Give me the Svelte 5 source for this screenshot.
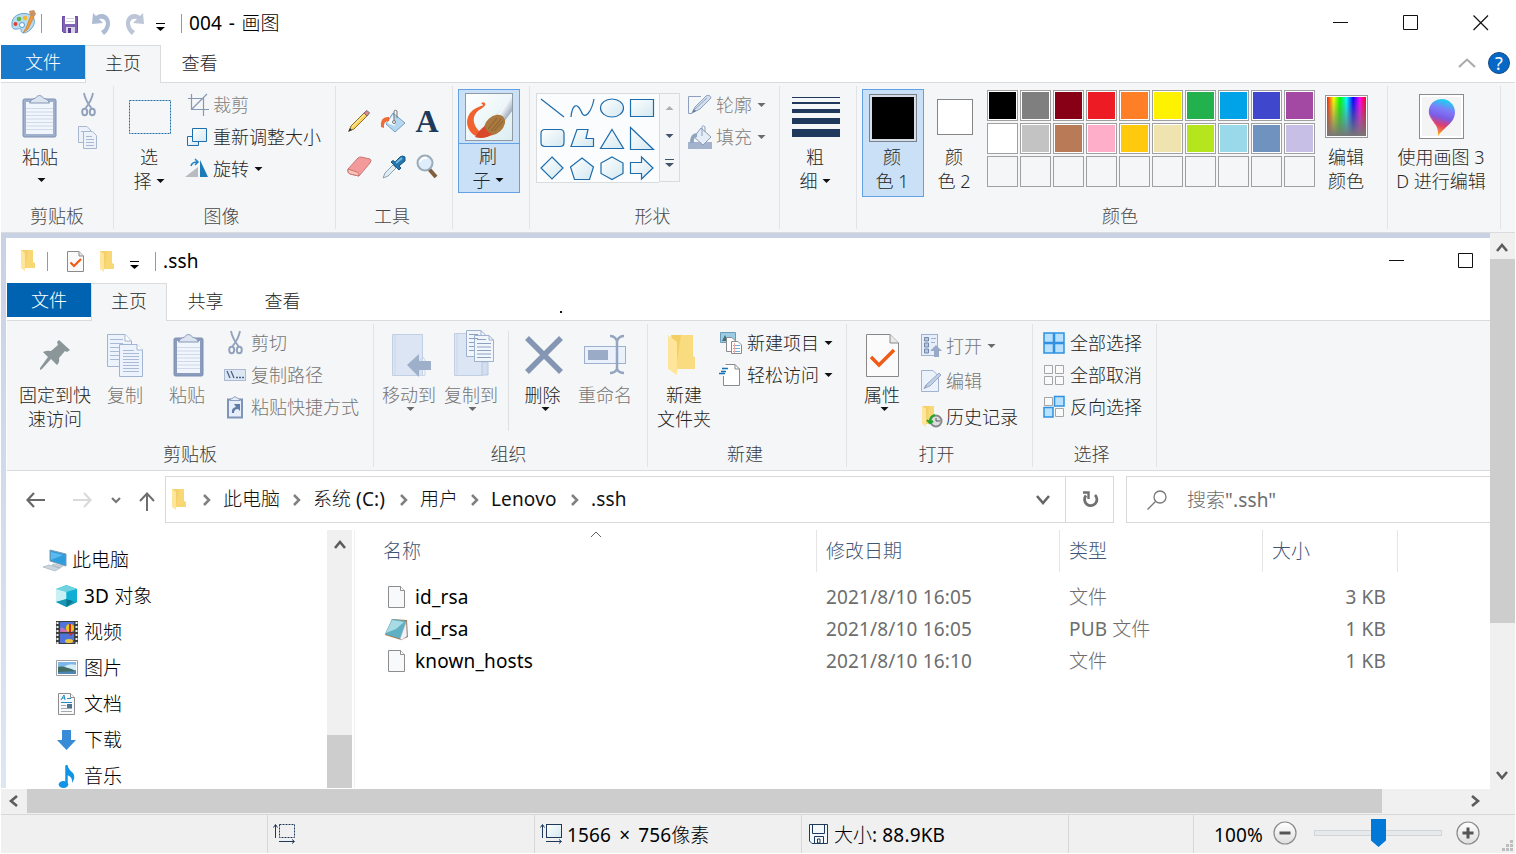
<script>
  const folder = '<path d="M1 1H12V19H5Z" fill="#f3d06b"/><path d="M8 1H13V13L15 14V19H5Z" fill="#f8d775"/><path d="M1 1L5 4V22L1 19Z" fill="#ffe69c"/>';
  const check = '<path d="M.5 .5H12L16.500 5V20.500H.5Z" fill="#fafafa" stroke="#8b8b8b"/><path d="M12 .5V5H16.500" fill="#e4e4e4" stroke="#8b8b8b"/><path d="M3.500 11.500L7 15L14 8" fill="none" stroke="#f05a12" stroke-width="2.200"/>';
  const page = '<path d="M.5 .5H12.500L16.500 4.500V21.500H.5Z" fill="#f8f9fa" stroke="#8d8d8d"/><path d="M12.500 .5V4.500H16.500" fill="#fff" stroke="#8d8d8d"/>';
  const cut = '<g fill="none" stroke="#93a3bd"><path d="M3 0C4 6 7 11 11 16M12 0C11 6 8 11 4 16" stroke-width="1.800"/><ellipse cx="3.700" cy="19" rx="2.500" ry="3.200" stroke-width="2"/><ellipse cx="11.300" cy="19" rx="2.500" ry="3.200" stroke-width="2"/></g>';
  const lines = (x, y, w, n, s) => Array.from({ length: n }, (_, i) => `M${x} ${y + i * s}h${w}`).join('');
  const clip = (w, h, c) => `<rect x="1" y="4" width="${w - 2}" height="${h - 5}" rx="1.500" fill="${c}" stroke="#7e90b4"/><rect x="4" y="7" width="${w - 8}" height="${h - 11}" fill="#f1f5fc"/><path d="${lines(4, 13.5, w - 8, 7, 3.5)}" stroke="#cfd9ea"/><path d="M${w / 2 - 10} 8q1-4 6-5q4-5 8 0q5 1 6 5z" fill="#dbe4f0" stroke="#8597b6"/>`;

  const icons = {
    palette: [25, 25, '<path d="M1 15C0 6 9 2 17 4C25 6 25 14 20 19C15 24 10 24 10 20C10 17 6 20 3 19C1 18 1 17 1 15Z" fill="#b8dcf2" stroke="#6ea4c9"/><circle cx="4.500" cy="14" r="2" fill="#e0412f"/><circle cx="8" cy="9" r="2.300" fill="#5fb548"/><circle cx="14" cy="8" r="2.300" fill="#f3b935"/><circle cx="11" cy="15" r="2.500" fill="#fff" stroke="#579bd0"/><path d="M20 5L15 18L12 23L17 19L23 7Z" fill="#f39b38" stroke="#c77427" stroke-width=".6"/><path d="M18 1L23 0L25 4L23 7L19 5Z" fill="#c89262"/>'],
    save: [17, 17, '<path d="M.5 .5H15.500V16.500H1.500L.5 15.500Z" fill="#8063b5" stroke="#67479f"/><rect x="3" y="0" width="10" height="8" fill="#fff"/><path d="M4 2.500H12M4 5.500H12" stroke="#d4cfe2"/><rect x="4" y="11" width="9" height="6" fill="#d9d3e6"/><rect x="6" y="12" width="3" height="5" fill="#56398d"/>'],
    undo: [20, 22, '<path d="M1 0L4 3C11-2 19 3 18 12Q17 18 12 22L9 18Q14 15 14 10Q13 5 7 6L11 10L0 11Z" fill="#aebbd4"/>'],
    redo: [20, 22, '<path d="M19 0L16 3C9-2 1 3 2 12Q3 18 8 22L11 18Q6 15 6 10Q7 5 13 6L9 10L20 11Z" fill="#bcc6d7"/>'],
    qat: [11, 8, '<path d="M1 .5H10" stroke="currentColor"/><path d="M1 4H10L5.500 8Z" fill="currentColor"/>'],
    min: [16, 16, '<path d="M0 7.500H15" stroke="#111"/>'],
    max: [16, 16, '<path d="M.5 .5H14.500V14.500H.5Z" fill="none" stroke="#111"/>'],
    close: [16, 16, '<path d="M.5 .5L15 15M15 .5L.5 15" stroke="#111" stroke-width="1.200"/>'],
    up: [18, 10, '<path d="M1 9L9 1.500L17 9" fill="none" stroke="#a9a9a9" stroke-width="2"/>'],
    arrow: [9, 4, '<path d="M.5 0H8.500L4.500 4Z" fill="currentColor"/>'],
    paste: [36, 44, clip(35, 43, '#9fb0cc')],
    cut: [15, 24, cut],
    copy: [20, 23, '<g fill="#edf2fa" stroke="#a8b6d0"><path d="M.5 .5H9L12.500 4V16.500H.5Z"/><path d="M5.500 5.500H14.500L18.500 9.500V22.500H5.500Z"/></g><path d="M3 5.500H9M8 10.500H14M8 13.500H16M8 16.500H16M8 19.500H16" stroke="#aab8d4"/>'],
    select: [42, 34, '<rect x=".5" y=".5" width="41" height="33" fill="none" stroke="#1c6ca5" stroke-dasharray="2 1"/>'],
    crop: [22, 22, '<path d="M4.500 0V15.500H22M1 4.500H16.500V22M20 0L5 15" fill="none" stroke="#8798b5" stroke-width="1.200"/>'],
    resize: [22, 22, '<defs><linearGradient id="rz" x2="1" y2="1"><stop stop-color="#fff"/><stop offset="1" stop-color="#d3e8f0"/></linearGradient></defs><path d="M.5 10.500H11.500V19.500H.5Z" fill="url(#rz)" stroke="#1e6fae"/><path d="M5.500 2.500H19.500V15.500H5.500Z" fill="url(#rz)" stroke="#1e6fae"/>'],
    rotate: [24, 22, '<path d="M-2 19H11V9Z" fill="#b8bcc0"/><path d="M13 2L21 19H13Z" fill="#1d7bb5"/><path d="M4 8Q5 4 10 4M8 1L11 4L8 7" fill="none" stroke="#2582bf" stroke-width="1.500"/>'],
    pencil: [24, 24, '<path d="M2 22L4 17L17 4L20 7L7 20Z" fill="#f7d25d" stroke="#907037"/><path d="M5 18L18 5" stroke="#fff0a7"/><path d="M17 4L20 1.500L22.500 4L20 7Z" fill="#e7868c" stroke="#766"/><path d="M1 23L3 19L5 21Z" fill="#333"/>'],
    bucket: [26, 25, '<path d="M13 4L25 14L15 23L6 15Z" fill="#b6d7f0" stroke="#74a0c5"/><path d="M13 6L15 17L7 14Z" fill="#eff8fe"/><path d="M14 12V3Q14 0 17 2V9" fill="none" stroke="#777"/><circle cx="14" cy="13" r="1.500" fill="#fff" stroke="#777"/><path d="M9 8Q0 7 1 18L4 19Q3 12 9 12Z" fill="#ef6a35"/>'],
    eraser: [25, 24, '<path d="M1 14L11 3Q12 2 14 2L23 4Q25 5 23 8L12 21L3 19Q0 18 1 14Z" fill="#f39b9b" stroke="#c97777"/><path d="M1 14L10 17Q12 18 12 21L3 19Q0 18 1 14Z" fill="#fac3b6" stroke="#c97777"/>'],
    dropper: [25, 25, '<path d="M2 23L4 18L12 10L15 13L7 21Z" fill="#e1edf4" stroke="#8ca1ac"/><path d="M10 7L12 5.500L14 7L19 2Q22 0 24 2V6L18 11L20 13L18 15Z" fill="#2477ae" stroke="#165789"/><path d="M15 8L21 3" stroke="#72b8df" stroke-width="2"/>'],
    lens: [24, 26, '<path d="M14 15L21 23" stroke="#80603e" stroke-width="4"/><circle cx="10" cy="9" r="7.500" fill="#dfedfb" stroke="#9aabba" stroke-width="2"/><path d="M5 8Q7 3 12 4" fill="none" stroke="#fff" stroke-width="2"/>'],
    brush: [48, 48, '<defs><linearGradient id="bg" x2="1" y2="1"><stop stop-color="#fff"/><stop offset="1" stop-color="#dceef2"/></linearGradient><linearGradient id="sl" x2="1" y2="1"><stop stop-color="#8998ab"/><stop offset=".45" stop-color="#f4f8fc"/><stop offset="1" stop-color="#66778f"/></linearGradient></defs><rect x=".5" y=".5" width="47" height="47" fill="url(#bg)" stroke="#8f9aa5"/><path d="M31 22L47 4V18L39 29Z" fill="url(#sl)"/><path d="M16 10Q19 8 20.500 11Q20 14 14 17C6 23 8 32 14 38L20 35L27 42Q17 47 9 42C-1 34 1 23 8 17Q14 13 18 12.500Q18 11 16 10Z" fill="#f0622e"/><ellipse cx="29.500" cy="32" rx="12" ry="8.500" transform="rotate(-42 29.500 32)" fill="#a9793f"/><path d="M23 36L32 25M26 38L36 26M29 38L38 28" stroke="#8a6030"/><path d="M10 44Q15 36 20 33Q21 39 27 41Q19 47 10 44Z" fill="#d9482a"/>'],
    outline: [25, 22, '<path d="M13 2.500H.5V19.500H4" fill="none" stroke="#8ca0bd"/><path d="M4 19L7 13L18 2Q22 0 23 4L12 15Z" fill="#d3deee" stroke="#8da0bd"/><path d="M7 15L19 4" stroke="#8fa4c4"/><path d="M4 19L6 15L8 17Z" fill="#627797"/>'],
    fill: [25, 24, '<path d="M0 17H24V24H0Z" fill="#a3b3ce"/><path d="M13 3L23 12L15 20L6 12Z" fill="#e5edf7" stroke="#899db9"/><path d="M9 8Q2 8 2 18H6Q5 12 9 12Z" fill="#8fa4bf"/><path d="M14 11V3Q14-1 17 2V7" fill="none" stroke="#8aa0bd"/>'],
    sizes: [48, 40, '<path d="M0 0H48V1H0ZM0 5H48V7H0ZM0 12H48V16H0ZM0 21H48V27H0ZM0 32H48V40H0Z" fill="#1e395b"/>'],
    spectrum: [43, 43, '<defs><linearGradient id="sp"><stop stop-color="#f11"/><stop offset=".17" stop-color="#ff0"/><stop offset=".33" stop-color="#0f0"/><stop offset=".5" stop-color="#0ff"/><stop offset=".67" stop-color="#00f"/><stop offset=".84" stop-color="#f0f"/><stop offset="1" stop-color="#f00"/></linearGradient><linearGradient id="sv" x2="0" y2="1"><stop stop-color="#777" stop-opacity="0"/><stop offset="1" stop-color="#777"/></linearGradient></defs><rect x=".5" y=".5" width="42" height="42" fill="#fff" stroke="#999"/><rect x="2" y="2" width="39" height="39" fill="url(#sp)"/><rect x="2" y="2" width="39" height="39" fill="url(#sv)"/>'],
    paint3d: [45, 45, '<defs><linearGradient id="p3" x1=".6" x2=".4" y2="1"><stop stop-color="#15d7f1"/><stop offset=".28" stop-color="#7f7cf8"/><stop offset=".5" stop-color="#7a5ce5"/><stop offset=".7" stop-color="#dd3d70"/><stop offset="1" stop-color="#ffb000"/></linearGradient></defs><rect x=".5" y=".5" width="44" height="44" fill="#fff" stroke="#8c8c8c"/><rect x="3" y="3" width="39" height="39" fill="#f4f4f4"/><path d="M23 5C30 5 36 11 36 18C36 29 25 33 19 42Q20 34 14 27C5 17 12 5 23 5Z" fill="url(#p3)"/><path d="M11 20Q12 27 20 35L19 41Q21 34 14 27Z" fill="#ff6f84"/>'],
    folder: [16, 23, folder],
    check: [17, 22, check],
    pin: [32, 32, '<path d="M20 1L31 11L28 13L26 12L20 19Q21 23 18 26L12 20L3 30L1 31L1 29L9 18L4 13Q8 11 12 12L19 6L18 3Z" fill="#8b9698"/>'],
    docs: [37, 43, `<g fill="#edf3fc" stroke="#a1b5d3"><path d="M.5 .5H18L24.500 7V32.500H.5Z"/><path d="M12.500 10.500H30L35.500 16V42.500H12.500Z"/></g><path d="M18 .5V7H24M30 10.500V16H36" fill="#fff" stroke="#a1b5d3"/><path d="${lines(3, 5.5, 13, 2, 4)}${lines(3, 13.500, 9, 4, 4)}${lines(16, 16.5, 11, 1, 3)}${lines(16, 19.5, 16, 7, 3)}" stroke="#a8bad6"/>`],
    clip2: [31, 43, clip(31, 43, '#8a9bbb')],
    path: [22, 12, '<rect x=".5" y=".5" width="21" height="11" fill="#dde7f4" stroke="#aabbd3"/><path d="M3 2L6 9M7 2L10 9" stroke="#4d6288" stroke-width="1.300"/><path d="M12 8.500H14M15 8.500H17M18 8.500H20" stroke="#4d6288" stroke-width="1.500"/>'],
    shortcut: [18, 23, '<path d="M2 3.500H16V21.500H2Z" fill="#e6eef9" stroke="#7e94b9" stroke-width="2"/><path d="M4 4.500Q5 2 7 2Q9-1 11 2Q13 2 14 4.500Z" fill="#e8eff8" stroke="#8da0bd"/><path d="M6 17Q5 12 10 11L8 8H14V15L12 13Q8 13 8 17Z" fill="#5f7ba6"/>'],
    move: [41, 44, '<path d="M.5 1.500H30.500V42.500H.5Z" fill="#dbe5f4" stroke="#c1cfe3"/><path d="M3 2V42M31 24Q35 28 33 36V42.500H27V28Z" fill="none" stroke="#cbd6e8"/><path d="M15 32L27 21V28H39V37H27V44Z" fill="#9eafc9"/>'],
    copyto: [42, 46, `<path d="M.5 3.500H28.500V45.500H.5Z" fill="#dbe5f4" stroke="#c1cfe3"/><path d="M28 32H34V45H28Z" fill="#d3deef" stroke="#b7c7df"/><path d="M3 4V45" stroke="#cbd6e8"/><g fill="#f1f6fc" stroke="#9eb1cd"><path d="M12.500 .5H27L32.500 6V26.500H12.500Z"/><path d="M20.500 5.500H35L39.500 10V31.500H20.500Z"/></g><path d="M27 .5V5M35 5.500V10H39.500" fill="none" stroke="#9eb1cd"/><path d="${lines(15, 4.5, 9, 2, 4)}${lines(15, 12.5, 5, 3, 4)}${lines(23, 9.5, 9, 1, 3)}${lines(23, 13.5, 14, 5, 3.500)}" stroke="#8ca1c1"/>`],
    del: [38, 38, '<path d="M2 2L36 36M36 2L2 36" stroke="#8596b5" stroke-width="5.500"/>'],
    rename: [43, 40, '<rect x=".5" y="11.500" width="41" height="17" fill="#eaf1fb" stroke="#9db0cc"/><path d="M4 15H24V25H4Z" fill="#9aabc7"/><path d="M33 4V36M26 1Q31 1 33 6Q35 1 40 1M26 38Q31 38 33 34Q35 38 40 38" fill="none" stroke="#94a5c1" stroke-width="2.500"/>'],
    bigfolder: [34, 42, '<path d="M4 1H26V22L28 24V35H9Z" fill="#f3ce65"/><path d="M14 1H26V22L28 24V35H9Z" fill="#f9dc80"/><path d="M1 1L10 8V41L1 35Z" fill="#ffe59a"/>'],
    newitem: [24, 23, '<path d="M.5 .5H15.500V10.500H.5Z" fill="#9acce4" stroke="#6e9bb7"/><path d="M2 9L5 3L8 9Z" fill="#446f79"/><path d="M6.500 5.500H12L15.500 9V19.500H6.500Z" fill="#fff" stroke="#8b8b8b"/><path d="M11.500 9.500H18L21.500 13V21.500H11.500Z" fill="#fff" stroke="#8b8b8b"/><path d="M13 13.500H20M13 16.500H20M13 19.500H20" stroke="#76aed3"/><path d="M14.500 11V21" stroke="#eaa"/>'],
    easy: [23, 23, '<path d="M5.500 .5H15L19.500 5V21.500H3.500V12" fill="#fff" stroke="#8b8b8b"/><path d="M15 .5V5H19.500" fill="none" stroke="#8b8b8b"/><path d="M2 4.500H8M1 7.500H6M-1 9.500H5" stroke="#1672b9" stroke-width="1.300"/>'],
    bigcheck: [34, 43, '<path d="M.5 .5H24L32.500 9V42.500H.5Z" fill="#fbfbfb" stroke="#888"/><path d="M24 .5V9H32.500" fill="#e9e9e9" stroke="#888"/><path d="M5 23L13 31L28 16" fill="none" stroke="#ef5b18" stroke-width="3.500"/>'],
    open: [22, 23, '<rect x=".5" y=".5" width="16" height="21" fill="#e7eef9" stroke="#9fb1cc"/><path d="M3.500 3.500H7.500V7H3.500ZM3.500 9H7.500V13H3.500ZM3.500 15H7.500V19H3.500Z" fill="#b8c7de" stroke="#7086aa"/><path d="M10 4.500H15M10 8.500H14" stroke="#9fb1cc"/><path d="M9 17L15 11L21 17H18V23H13V17Z" fill="#98aac7"/>'],
    edit: [22, 22, '<path d="M.5 .5H12L17.500 6V21.500H.5Z" fill="#ecf2fb" stroke="#a0b3d0"/><path d="M4 18L6 14L18 3L20 5L9 16Z" fill="#c2d0e5" stroke="#94a8c7"/><path d="M3 19L5 15" stroke="#8296b7"/>'],
    history: [22, 23, folder + '<circle cx="15" cy="16" r="5.500" fill="#ddd" stroke="#888" stroke-width="2"/><path d="M15 13V16H19" fill="none" stroke="#555"/><path d="M14 10Q9 11 9 17M6 15L9 18L12 16" fill="none" stroke="#29a331" stroke-width="2.200"/>'],
    all: [22, 22, '<path d="M1 1H10.500V10.500H1ZM11.500 1H21V10.500H11.500ZM1 11.500H10.500V21H1ZM11.500 11.500H21V21H11.500Z" fill="#b7e1ff" stroke="#2f91df" stroke-width="1.500"/>'],
    none: [22, 22, '<path d="M1.500 1.500H9.500V9.500H1.500ZM12.500 1.500H20.500V9.500H12.500ZM1.500 12.500H9.500V20.500H1.500ZM12.500 12.500H20.500V20.500H12.500Z" fill="#fafafa" stroke="#a5a5a5"/>'],
    invert: [22, 22, '<path d="M1.500 1.500H9.500V9.500H1.500ZM12.500 12.500H20.500V20.500H12.500Z" fill="#fafafa" stroke="#a5a5a5"/><path d="M11.500 .5H21V10H11.500ZM1 11.500H10V21H1Z" fill="#b7e1ff" stroke="#2f91df" stroke-width="1.500"/>'],
    back: [20, 16, '<path d="M19 8H1.500M8 1L1.500 8L8 15" fill="none" stroke="#686868" stroke-width="2.200"/>'],
    fwd: [20, 16, '<path d="M0 8H17.500M11 1L17.500 8L11 15" fill="none" stroke="#dadada" stroke-width="2.200"/>'],
    small: [10, 7, '<path d="M1 1L5 5L9 1" fill="none" stroke="#777" stroke-width="2.200"/>'],
    upnav: [16, 20, '<path d="M8 19V2M1 9L8 1.500L15 9" fill="none" stroke="#6e6e6e" stroke-width="2"/>'],
    chev: [8, 12, '<path d="M1 1L6 6L1 11" fill="none" stroke="#808080" stroke-width="2.500"/>'],
    down: [14, 10, '<path d="M1 1L7 8L13 1" fill="none" stroke="#666" stroke-width="2.600"/>'],
    sup: [12, 9, '<path d="M1 8L6 2L11 8" fill="none" stroke="#5c5c5c" stroke-width="2.600"/>'],
    sdown: [12, 9, '<path d="M1 1L6 7L11 1" fill="none" stroke="#5c5c5c" stroke-width="2.600"/>'],
    sleft: [9, 12, '<path d="M8 1L2 6L8 11" fill="none" stroke="#5c5c5c" stroke-width="2.600"/>'],
    sright: [9, 12, '<path d="M1 1L7 6L1 11" fill="none" stroke="#5c5c5c" stroke-width="2.600"/>'],
    refresh: [16, 18, '<path d="M13 4A6.200 6.200 0 1 1 4 4.500" fill="none" stroke="#707070" stroke-width="2.800"/><path d="M1 1.500H6.500V8" fill="none" stroke="#707070" stroke-width="2.400"/>'],
    search: [20, 20, '<circle cx="13" cy="7" r="6" fill="none" stroke="#777" stroke-width="1.300"/><path d="M8.500 11.500L.5 19.500" stroke="#777" stroke-width="1.300"/>'],
    sort: [12, 7, '<path d="M1 6L6 1L11 6" fill="none" stroke="#666"/>'],
    pc: [24, 21, '<path d="M7 0L23 4V16L7 11Z" fill="#2e9ddb" stroke="#7d9baf"/><path d="M8 2L20 5L8 10Z" fill="#5cb9ef"/><path d="M11 14L20 16L17 18L9 15ZM0 17L6 15L17 18L12 21Z" fill="#cbd5dc" stroke="#9baab5" stroke-width=".6"/>'],
    cube: [23, 22, '<path d="M1 4L11.500 0L22 4V17L11.500 22L1 17Z" fill="#24bfd5"/><path d="M1 4L11.500 0L22 4L11.500 7Z" fill="#6fd3df"/><path d="M1 4L11.500 7V14L1 17Z" fill="#c9f1f4"/><path d="M1 17L11.500 14L22 17L11.500 22Z" fill="#1897b5"/><path d="M11.500 14L18 16L11.500 22Z" fill="#087590"/><path d="M11.500 7L22 4V17L11.500 14Z" fill="#10b0d4"/>'],
    video: [22, 23, '<path d="M0 0H22V23H0Z" fill="#3d3d3d"/><path d="M1.500 1V23M20.500 1V23" stroke="#eee" stroke-width="2" stroke-dasharray="2 2"/><path d="M4 1H18V11H4ZM4 12.500H18V22H4Z" fill="#4f74d9"/><path d="M4 11L5 6L12 10V11Z" fill="#cf6fb0"/><ellipse cx="14" cy="7" rx="4" ry="4" fill="#f2c51b"/><path d="M14 3V11M10 20H18" stroke="#c92b24" stroke-width="2"/><path d="M12 12H17L15 15Z" fill="#c92b24"/><ellipse cx="13" cy="20" rx="4" ry="2" fill="#eac73a"/>'],
    picture: [22, 16, '<path d="M.5 .5H21.500V15.500H.5Z" fill="#fff" stroke="#a0a0a0"/><path d="M2 2H20V14H2Z" fill="#7eb6e8"/><path d="M8 7Q12 3 20 5V10H6Z" fill="#d4edf6"/><path d="M2 7Q7 5 20 11V14H2Z" fill="#436c63"/><path d="M2 12L20 11V14H2Z" fill="#4d86b2"/>'],
    document: [17, 22, page + '<path d="M3 7L6 2L7 7M4 5H7" fill="none" stroke="#228ac5"/><path d="M9 5.500H13M3 9.500H14" stroke="#228ac5"/><path d="M3 12.500H8M3 15.500H14M3 18.500H14" stroke="#a0aab0"/><path d="M9 11H14V15H9Z" fill="#4d7493"/>'],
    download: [19, 20, '<path d="M5 0H14V10H19L9.500 20L0 10H5Z" fill="#378bd7"/>'],
    music: [18, 23, '<path d="M8.500 1V18" stroke="#0f94e6" stroke-width="2.500"/><ellipse cx="5.500" cy="19.500" rx="4.800" ry="3.500" fill="#0f94e6"/><path d="M7.500 0H9.500Q10 4 15 8Q18 12 14 18Q15 12 9 10Z" fill="#0f94e6"/>'],
    page: [17, 22, page],
    notebook: [25, 23, '<path d="M8 1L23 2L24 19L17 22L1 17Z" fill="#a97c56"/><path d="M8 1L22 3L17 21L1 16Z" fill="#5fb0c4"/><path d="M8 2L20 4L12 11L2 15Z" fill="#a8dbe3"/><path d="M22 4L23 18L18 22L16 21Z" fill="#f1f4f6" stroke="#aab" stroke-width=".5"/>'],
    seldim: [24, 20, '<path d="M2.500 1V14M.5 3.500L2.500 .5L4.500 3.500M6 17.500H21M19 15.500L21.500 17.500L19 19.500" fill="none" stroke="#1e395b"/><rect x="6.500" y=".5" width="15" height="13" fill="none" stroke="#1e395b" stroke-dasharray="2 1"/>'],
    imgdim: [24, 20, '<path d="M2.500 1V14M.5 3.500L2.500 .5L4.500 3.500M6 17.500H21M19 15.500L21.500 17.500L19 19.500" fill="none" stroke="#1e395b"/><rect x="6.500" y=".5" width="15" height="13" fill="url(#rz)" stroke="#1e395b"/>'],
    disk: [20, 20, '<path d="M.5 .5H18.500V19.500H3L.5 17Z" fill="#f4f8fb" stroke="#1e395b"/><path d="M3.500 1V9.500H15.500V1M5.500 19V12.500H14.500V19M8.500 15H11V19H8.500Z" fill="none" stroke="#1e395b"/>'],
    minus: [24, 24, '<circle cx="12" cy="12" r="11" fill="url(#bt)" stroke="#8b8b8b" stroke-width="1.200"/><path d="M6.500 12H17.500" stroke="#555" stroke-width="3"/>'],
    plus: [24, 24, '<defs><linearGradient id="bt" x2="0" y2="1"><stop stop-color="#fff"/><stop offset="1" stop-color="#dedede"/></linearGradient></defs><circle cx="12" cy="12" r="11" fill="url(#bt)" stroke="#8b8b8b" stroke-width="1.200"/><path d="M6.500 12H17.500M12 6.500V17.500" stroke="#555" stroke-width="3"/>'],
    thumb: [15, 28, '<path d="M0 0H15V21.500L7.500 28L0 21.500Z" fill="#0078d7"/>'],
    grip: [11, 11, '<path d="M8 0H11V3H8ZM4 4H7V7H4ZM8 4H11V7H8ZM0 8H3V11H0ZM4 8H7V11H4ZM8 8H11V11H8Z" fill="#bdbdbd"/>']
  };

  const shapes = [
    'M4 5L27 23', 'M4 23C5 11 10 8 14 17C18 28 25 16 27 5', 'M15 5A11.500 9 0 1 0 15 23A11.500 9 0 1 0 15 5Z', 'M3.500 5.500H26.500V22.500H3.500Z',
    'M8 5.500H23Q27 5.500 27 9.500V18.500Q27 22.500 23 22.500H8Q4 22.500 4 18.500V9.500Q4 5.500 8 5.500Z', 'M10 5.500H21L19 14.500H26.500V22.500H4Z', 'M15 5.500L26.500 24.500H3.500Z', 'M3.500 3.500L26.500 25.500H3.500Z',
    'M15 3L26 14L15 25L4 14Z', 'M15 4L26.500 13L22.500 25.500H7.500L3.500 13Z', 'M15 3L26 9V19.500L15 25.500L4 19.500V9Z', 'M3.500 8.500H14.500V3L26 14L14.500 25V19.500H3.500Z'
  ];
  const colors = ['#000', '#7f7f7f', '#880015', '#ed1c24', '#ff7f27', '#fff200', '#22b14c', '#00a2e8', '#3f48cc', '#a349a4',
    '#fff', '#c3c3c3', '#b97a57', '#ffaec9', '#ffc90e', '#efe4b0', '#b5e61d', '#99d9ea', '#7092be', '#c8bfe7',
    ...Array(10).fill('')];
  const tree = [['pc', '此电脑'], ['cube', '3D 对象'], ['video', '视频'], ['picture', '图片'], ['document', '文档'], ['download', '下载'], ['music', '音乐']];
  const files = [['page', 'id_rsa', '2021/8/10 16:05', '文件', '3 KB'], ['notebook', 'id_rsa', '2021/8/10 16:05', 'PUB 文件', '1 KB'], ['page', 'known_hosts', '2021/8/10 16:10', '文件', '1 KB']];
  const runs = (t) => t.match(/[\u4e00-\u9fff]+|[^\u4e00-\u9fff]+/g);
</script>

{#snippet icon(n)}
  <svg class="ic" width={icons[n][0]} height={icons[n][1]} viewBox="0 0 {icons[n][0]} {icons[n][1]}">{@html icons[n][2]}</svg>
{/snippet}

{#snippet mix(t)}<bdi>{#each runs(t) as r}<bdi class:latin={r.charCodeAt(0) < 0x4e00}>{r}</bdi>{/each}</bdi>{/snippet}

{#snippet big(n, l1, l2, arrow, cls)}
  <div class="big {cls}">
    <div class="pic">{@render icon(n)}</div>
    <div class="line">{l1}</div>
    {#if l2}
      <div class="line">{l2}{#if arrow}{@render icon('arrow')}{/if}</div>
    {:else if arrow}
      <div class="below">{@render icon('arrow')}</div>
    {/if}
  </div>
{/snippet}

{#snippet row(n, text, arrow, dim)}
  <div class="row" class:dim><span class="slot">{@render icon(n)}</span><span>{text}</span>{#if arrow}{@render icon('arrow')}{/if}</div>
{/snippet}

<div class="app">
  <header class="title">
    <span class="t-app">{@render icon('palette')}</span><i class="bar"></i>
    <span class="t-save">{@render icon('save')}</span>
    <span class="t-undo">{@render icon('undo')}</span>
    <span class="t-redo">{@render icon('redo')}</span>
    <span class="t-qat">{@render icon('qat')}</span><i class="bar b2"></i>
    <span class="name">{@render mix('004 - 画图')}</span>
    <div class="win">{@render icon('min')}{@render icon('max')}{@render icon('close')}</div>
  </header>
  <nav class="tabs">
    <span class="file">文件</span><span class="tab on">主页</span><span class="tab">查看</span>
    <div class="help">{@render icon('up')}<b>?</b></div>
  </nav>
  <section class="ribbon paint">
    <div class="group g-clip">
      <div class="body">
        {@render big('paste', '粘贴', '', true, 'b-paste')}
        <div class="stack">{@render icon('cut')}{@render icon('copy')}</div>
      </div>
      <div class="label">剪贴板</div>
    </div>
    <div class="group g-image">
      <div class="body">
        {@render big('select', '选', '择', true, 'b-select')}
        <div class="rows">{@render row('crop', '裁剪', false, true)}{@render row('resize', '重新调整大小')}{@render row('rotate', '旋转', true)}</div>
      </div>
      <div class="label">图像</div>
    </div>
    <div class="group g-tools">
      <div class="tools">
        <span>{@render icon('pencil')}</span><span>{@render icon('bucket')}</span><span class="glyph">A</span>
        <span>{@render icon('eraser')}</span><span>{@render icon('dropper')}</span><span>{@render icon('lens')}</span>
      </div>
      <div class="label">工具</div>
    </div>
    <div class="group g-brush"><div class="body">{@render big('brush', '刷', '子', true, 'active split nudge')}</div></div>
    <div class="group g-shapes">
      <div class="body">
        <div class="shapes">
          {#each shapes as d, i}<svg width="30" height="30" viewBox="0 0 30 30"><path {d} fill={i < 2 ? 'none' : 'url(#rz)'} stroke="#1e6cab" stroke-width="1.200" /></svg>{/each}
        </div>
        <div class="spin"><span class="off">{@render icon('arrow')}</span><span>{@render icon('arrow')}</span><span>{@render icon('qat')}</span></div>
        <div class="rows">{@render row('outline', '轮廓', true, true)}{@render row('fill', '填充', true, true)}</div>
      </div>
      <div class="label">形状</div>
    </div>
    <div class="group g-size"><div class="body">{@render big('sizes', '粗', '细', true, 'b-size nudge')}</div></div>
    <div class="group g-colors">
      <div class="body">
        <div class="big active c1 nudge"><div class="pic"><i class="sw1"></i></div><div class="line">颜</div><div class="line">色 1</div></div>
        <div class="big c2"><div class="pic"><i class="sw2"></i></div><div class="line">颜</div><div class="line">色 2</div></div>
        <div class="palette">{#each colors as c}<i class:empty={!c} style="--c:{c || 'transparent'}"></i>{/each}</div>
        {@render big('spectrum', '编辑', '颜色', false, 'b-edit')}
      </div>
      <div class="label">颜色</div>
    </div>
    <div class="group g-3d"><div class="body">{@render big('paint3d', '使用画图 3', 'D 进行编辑', false, 'b-3d')}</div></div>
  </section>

  <main class="work">
    <div class="canvas">
      <div class="page">
        <i class="dot"></i>
        <header class="title t2">
          <span class="e-f">{@render icon('folder')}</span><i class="bar"></i>
          <span class="e-c">{@render icon('check')}</span>
          <span class="e-f2">{@render icon('folder')}</span>
          <span class="e-q">{@render icon('qat')}</span><i class="bar b2"></i>
          <span class="name">{@render mix('.ssh')}</span>
          <div class="win">{@render icon('min')}{@render icon('max')}</div>
        </header>
        <nav class="tabs">
          <span class="file">文件</span><span class="tab on">主页</span><span class="tab">共享</span><span class="tab">查看</span>
        </nav>
        <section class="ribbon explorer">
          <div class="group x-clip">
            <div class="body">
              {@render big('pin', '固定到快', '速访问', false, 'b-pin')}
              {@render big('docs', '复制', '', false, 'b60 dim')}
              {@render big('clip2', '粘贴', '', false, 'b60 dim nudge')}
              <div class="rows">{@render row('cut', '剪切', false, true)}{@render row('path', '复制路径', false, true)}{@render row('shortcut', '粘贴快捷方式', false, true)}</div>
            </div>
            <div class="label">剪贴板</div>
          </div>
          <div class="group x-org">
            <div class="body">
              {@render big('move', '移动到', '', true, 'b62 dim first shift')}
              {@render big('copyto', '复制到', '', true, 'b62 dim shift high')}
              <i class="vsep"></i>
              {@render big('del', '删除', '', true, 'b-del nudge')}
              {@render big('rename', '重命名', '', false, 'b62 dim')}
            </div>
            <div class="label">组织</div>
          </div>
          <div class="group x-new">
            <div class="body">
              {@render big('bigfolder', '新建', '文件夹', false, 'b-new')}
              <div class="rows">{@render row('newitem', '新建项目', true)}{@render row('easy', '轻松访问', true)}</div>
            </div>
            <div class="label">新建</div>
          </div>
          <div class="group x-open">
            <div class="body">
              {@render big('bigcheck', '属性', '', true, 'b-prop nudge')}
              <div class="rows">{@render row('open', '打开', true, true)}{@render row('edit', '编辑', false, true)}{@render row('history', '历史记录')}</div>
            </div>
            <div class="label">打开</div>
          </div>
          <div class="group x-sel">
            <div class="body"><div class="rows">{@render row('all', '全部选择')}{@render row('none', '全部取消')}{@render row('invert', '反向选择')}</div></div>
            <div class="label">选择</div>
          </div>
        </section>
        <div class="address">
          <div class="arrows">{@render icon('back')}{@render icon('fwd')}{@render icon('small')}{@render icon('upnav')}</div>
          <div class="crumbs">
            <span class="cf">{@render icon('folder')}</span>
            {#each [['此电脑', 90], ['系统 (C:)', 107], ['用户', 71], ['Lenovo', 100], ['.ssh', 80]] as [c, w]}
              <span class="crumb" style="width:{w}px">{@render icon('chev')}<span>{@render mix(c)}</span></span>
            {/each}
            <span class="drop">{@render icon('down')}</span>
            <span class="refresh">{@render icon('refresh')}</span>
          </div>
          <div class="search">{@render icon('search')}<span>{@render mix('搜索".ssh"')}</span></div>
        </div>
        <div class="panes">
          <aside>
            <div class="tree">
              {#each tree as [n, t], i}<div class="node" class:root={i === 0}><span>{@render icon(n)}</span>{@render mix(t)}</div>{/each}
            </div>
            <div class="tscroll">{@render icon('sup')}<i></i></div>
          </aside>
          <div class="list">
            <div class="lr head"><span class="n">名称<em>{@render icon('sort')}</em></span><span class="d">修改日期</span><span class="k">类型</span><span class="s">大小</span></div>
            {#each files as [n, name, date, kind, size]}
              <div class="lr"><span class="n"><b>{@render icon(n)}</b>{@render mix(name)}</span><span class="d">{@render mix(date)}</span><span class="k">{@render mix(kind)}</span><span class="s">{@render mix(size)}</span></div>
            {/each}
          </div>
        </div>
      </div>
    </div>
    <div class="vscroll">{@render icon('sup')}<i></i>{@render icon('sdown')}</div>
  </main>
  <div class="hscroll">{@render icon('sleft')}<i></i>{@render icon('sright')}</div>
  <footer>
    <div class="f1"></div>
    <div class="f2">{@render icon('seldim')}</div>
    <div class="f2">{@render icon('imgdim')}<span class="dims">{@render mix('1566 × 756像素')}</span></div>
    <div class="f3">{@render icon('disk')}<span>{@render mix('大小: 88.9KB')}</span></div>
    <div class="f4"></div>
    <div class="zoom"><span>{@render mix('100%')}</span>{@render icon('minus')}<div class="track">{@render icon('thumb')}</div>{@render icon('plus')}</div>
    <div class="grip">{@render icon('grip')}</div>
  </footer>
</div>

<style>
  :global(body) { margin: 0; background: #fff; overflow: hidden; }
  .app { width: 1515px; height: 853px; box-sizing: border-box; padding-left: 1px; display: flex; flex-direction: column; overflow: hidden; background: #fff; color: #262626; font: 18px/24px "Noto Sans", "Noto Sans CJK SC", sans-serif; font-weight: 300; white-space: nowrap; }
  .app :global(*) { box-sizing: border-box; }
  i, em { font-style: normal; display: block; flex: none; }
  bdi { white-space: pre; }
  .latin { font-weight: 400; letter-spacing: .15px; }
  .ic { display: block; flex: none; overflow: visible; }
  .title { height: 45px; flex: none; display: flex; align-items: center; color: #000; font-size: 19px; }
  .bar { width: 1px; height: 19px; background: #999; margin-top: 2px; }
  .t-app { margin-left: 10px; width: 30px; }
  .t-save { margin: 4px 0 0 20px; width: 30px; }
  .t-undo { width: 32px; margin-top: 3px; }
  .t-redo { width: 31px; margin-top: 3px; }
  .t-qat, .e-q { width: 26px; margin-top: 8px; }
  .name { margin-left: 7px; word-spacing: 1.5px; }
  .t2 .name { letter-spacing: 0; }
  .win { margin-left: auto; display: flex; gap: 54px; padding-right: 26px; }
  .tabs { height: 37px; flex: none; display: flex; align-items: flex-start; position: relative; }
  .file { width: 84px; height: 34px; line-height: 34px; background: #1979ca; color: #fff; text-align: center; }
  .tab { width: 77px; height: 38px; line-height: 36px; text-align: center; flex: none; }
  .tab.on { width: 76px; background: #f5f6f7; border: 1px solid #dadbdc; border-bottom: 0; z-index: 1; line-height: 35px; }
  .help { margin-left: auto; display: flex; align-items: center; gap: 12px; padding: 7px 5px 0 0; }
  .help b { width: 22px; height: 22px; border-radius: 50%; background: #0568c6; border: 1px solid #164a86; color: #fff; text-align: center; font-size: 18px; line-height: 20px; font-weight: 400; }
  .ribbon { height: 151px; flex: none; background: #f5f6f7; border-top: 1px solid #dadbdc; border-bottom: 1px solid #dadbdc; display: flex; padding: 3px 0; }
  .group { flex: none; border-right: 1px solid #e2e3e4; display: flex; flex-direction: column; justify-content: space-between; }
  .body { display: flex; align-items: flex-start; }
  .label { text-align: center; color: #484848; padding: 0 4px 1px 0; }
  .g-clip .label, .x-clip .label { padding-right: 0; }
  .big { display: flex; flex-direction: column; align-items: center; flex: none; }
  .pic { height: 59px; display: flex; align-items: center; padding-top: 2px; }
  .line { height: 24px; display: flex; align-items: center; }
  .big:global(.nudge) .line { margin-right: 2px; }
  .line > .ic { margin-left: 4px; color: #111; }
  .below { padding: 9px 0 0 3px; color: #111; }
  .rows { display: flex; flex-direction: column; padding-top: 3px; }
  .row { height: 32px; display: flex; align-items: center; }
  .row .ic { color: #111; }
  .row > .ic { margin-left: 5px; }
  .slot { width: 26px; flex: none; }
  .dim, .row.dim { color: #808080; }
  .dim .below, .row.dim > .ic { color: #6b6b6b; }
  .g-clip { width: 113px; } .g-image { width: 222px; } .g-tools { width: 117px; } .g-brush { width: 77px; }
  .g-shapes { width: 250px; } .g-size { width: 77px; } .g-colors { width: 531px; } .g-3d { width: 113px; }
  .big:global(.b-paste) { width: 64px; margin-left: 7px; }
  .stack { display: flex; flex-direction: column; align-items: center; gap: 9px; padding: 7px 0 0 6px; }
  .big:global(.b-select) { width: 56px; margin-left: 7px; }
  .big:global(.b-select) .pic { padding-left: 2px; }
  .g-image .rows { margin-left: 10px; }
  .g-image .label { padding-right: 6px; }
  .tools { display: grid; grid-template-columns: repeat(3, 34px); grid-auto-rows: 46px; padding: 12px 0 0 6px; }
  .tools span { display: flex; align-items: center; justify-content: center; }
  .glyph { font: bold 32px/46px "Liberation Serif", serif; color: #1e395b; }
  .active { background: #c9e0f7; border: 1px solid #62a2e4; width: 62px; margin: 3px 0 0 5px; }
  .active .pic { height: 55px; padding-top: 0; }
  .big:global(.split) { height: 104px; }
  .big:global(.split) .pic { border-bottom: 1px solid #62a2e4; width: 60px; justify-content: center; }
  .shapes { display: grid; grid-template-columns: repeat(4, 30px); width: 123px; height: 90px; margin: 7px 0 0 6px; border: 1px solid #dadbdc; border-right: 0; background: #fbfcfd; overflow: hidden; }
  .shapes svg { display: block; height: 30px; }
  .spin { width: 21px; height: 89px; margin-top: 7px; border: 1px solid #dadbdc; display: flex; flex-direction: column; color: #44546a; }
  .spin span { flex: 1; display: flex; align-items: center; justify-content: center; }
  .spin .off { color: #b0b0b0; }
  .off .ic { transform: scaleY(-1); }
  .spin span:last-child { padding-bottom: 4px; }
  .g-shapes .rows { margin-left: 8px; }
  .g-shapes .slot { width: 28px; }
  .big:global(.b-size) { width: 60px; margin-left: 6px; }
  .c1 { height: 108px; }
  .sw1 { width: 48px; height: 48px; background: #000; border: 1px solid #7a8089; box-shadow: inset 0 0 0 2px #d4dde8; }
  .c2 { width: 60px; }
  .c2 .pic { padding-left: 1px; }
  .sw2 { width: 36px; height: 36px; background: #fff; border: 1px solid #868686; }
  .palette { display: grid; grid-template-columns: repeat(10, 31px); grid-auto-rows: 31px; gap: 2px; margin: 4px 0 0 3px; }
  .palette i { background: var(--c); border: 1px solid #a0a0a0; box-shadow: inset 0 0 0 1px #fff; }
  .palette i.empty { box-shadow: none; }
  .big:global(.b-edit) { width: 50px; margin-left: 6px; }
  .big:global(.b-3d) { width: 98px; margin-left: 4px; }

  .work { height: 556px; flex: none; display: flex; }
  .canvas { width: 1489px; flex: none; padding: 5px 1px 0 5px; background: linear-gradient(#c8d2e4, #dbe7f3); overflow: hidden; height: 555px; }
  .page { background: #fff; height: 550px; width: 1484px; padding-left: 1px; position: relative; overflow: hidden; display: flex; flex-direction: column; }
  .dot { position: absolute; left: 554px; top: 73px; width: 2px; height: 2px; background: #111; }
  .t2 .e-f { margin-left: 13px; width: 27px; }
  .e-c { margin-left: 19px; width: 32px; padding-top: 2px; }
  .e-f2 { width: 30px; padding-top: 2px; }
  .t2 .win { padding-right: 16px; gap: 53px; }
  .page .file { background: #0063b1; }
  .explorer { color: #222; }
  .x-clip { width: 367px; } .x-org { width: 274px; } .x-new { width: 199px; } .x-open { width: 186px; } .x-sel { width: 124px; }
  .explorer .pic { padding-top: 3px; }
  .explorer .below { padding-top: 0; }
  .explorer .dim { color: #757575; }
  .explorer .label { color: #3c3c3c; }
  .big:global(.b-pin) { width: 74px; margin-left: 11px; }
  .big:global(.b60) { width: 60px; margin-left: 3px; }
  .x-clip .rows { margin-left: 6px; }
  .x-clip .slot { width: 27px; display: flex; justify-content: center; padding-right: 5px; }
  .big:global(.b62) { width: 62px; }
  .big:global(.first) { margin-left: 4px; }
  .big:global(.shift) .pic { padding-left: 6px; }
  .big:global(.high) .pic { padding: 0 0 2px 8px; }
  .vsep { width: 1px; height: 100px; background: #dfe0e2; margin: 7px 4px 0 6px; }
  .big:global(.b-del) { width: 61px; }
  .big:global(.b-new) { width: 64px; margin-left: 4px; }
  .x-new .rows { margin-left: 4px; }
  .x-new .slot { width: 27px; }
  .big:global(.b-prop) { width: 50px; margin-left: 11px; }
  .x-open .rows { margin-left: 13px; padding-top: 4px; }
  .x-open .row { height: 35.5px; }
  .x-open .slot { width: 25px; }
  .x-open .label, .x-sel .label { padding-right: 6px; }
  .x-sel .rows { margin-left: 10px; }
  .x-sel .slot { width: 27px; }

  .address { height: 59px; flex: none; padding-top: 5px; display: flex; font-size: 19px; color: #111; }
  .arrows { width: 158px; flex: none; height: 48px; display: flex; align-items: center; padding-left: 19px; }
  .arrows .ic:nth-child(2) { margin-left: 27px; }
  .arrows .ic:nth-child(3) { margin-left: 18px; }
  .arrows .ic:nth-child(4) { margin: 3px 0 0 18px; }
  .crumbs { width: 949px; height: 47px; border: 1px solid #d9d9d9; display: flex; align-items: center; flex: none; }
  .cf { width: 37px; padding-left: 5px; }
  .crumb { display: flex; align-items: center; gap: 12px; }
  .crumb > span { padding-bottom: 2px; }
  .drop { margin-left: auto; width: 29px; }
  .refresh { width: 48px; height: 45px; border-left: 1px solid #d9d9d9; display: flex; align-items: center; justify-content: center; }
  .search { margin-left: 12px; width: 420px; height: 47px; flex: none; border: 1px solid #d9d9d9; display: flex; align-items: center; gap: 20px; padding-left: 20px; color: #6d6d6d; }
  .panes { height: 258px; display: flex; font-size: 19px; color: #000; }
  aside { width: 348px; flex: none; display: flex; border-right: 1px solid #f0f0f0; }
  .tree { width: 320px; padding-top: 12px; height: 258px; overflow: hidden; }
  .node { height: 36px; display: flex; align-items: center; padding-left: 48px; }
  .node > span { width: 29px; display: flex; justify-content: center; padding-right: 6px; }
  .node.root { padding-left: 36px; }
  .tscroll { width: 25px; background: #f0f0f0; display: flex; flex-direction: column; align-items: center; justify-content: space-between; padding-top: 10px; }
  .tscroll i { width: 25px; height: 53px; background: #cdcdcd; }
  .lr { display: flex; height: 32px; align-items: center; color: #6d6d6d; }
  .lr span { flex: none; }
  .n { width: 462px; padding-left: 60px; color: #000; position: relative; display: flex; align-items: center; }
  .n b { width: 30px; margin-left: -30px; display: flex; justify-content: center; padding-right: 8px; }
  .d { width: 243px; padding-left: 9px; }
  .k { width: 203px; padding-left: 9px; }
  .s { width: 135px; padding-right: 12px; text-align: right; }
  .head { height: 42px; margin-bottom: 9px; }
  .head span { height: 42px; line-height: 42px; border-right: 1px solid #e5e5e5; color: #3f5573; }
  .head .n { padding-left: 28px; }
  .head .s { text-align: left; padding-left: 9px; }
  .head em { position: absolute; left: 235px; top: 1px; }
  .vscroll { width: 25px; background: #f0f0f0; display: flex; flex-direction: column; align-items: center; padding: 10px 1px 9px 0; }
  .vscroll i { width: 25px; height: 364px; background: #cdcdcd; margin: 7px -1px auto 0; }
  .hscroll { height: 25px; flex: none; background: #f0f0f0; display: flex; align-items: center; padding: 0 35px 1px 8px; }
  .hscroll i { width: 1355px; height: 24px; background: #cdcdcd; margin: 0 auto 0 9px; }
  footer { height: 39px; flex: none; background: #f0f0f0; border-top: 1px solid #d7d7d7; display: flex; color: #000; font-size: 19px; }
  footer > div { display: flex; align-items: center; border-right: 1px solid #d7d7d7; flex: none; }
  footer span { padding-top: 2px; }
  .dims { word-spacing: 3px; }
  .f1, .f2, .f3 { width: 267px; }
  .f2 { padding-left: 5px; gap: 3px; }
  .f3 { padding-left: 7px; gap: 5px; }
  .f4 { width: 125px; }
  footer .zoom { border: 0; padding-left: 20px; width: 308px; }
  .zoom > .ic { margin-top: -2px; }
  .zoom span { width: 59px; }
  .track { width: 128px; height: 6px; margin: -2px 14px 0 17px; background: #e7eaec; border: 1px solid #d2d5d7; display: flex; align-items: center; padding-left: 56px; }
  footer .grip { border: 0; align-items: flex-end; padding-bottom: 2px; }
</style>
